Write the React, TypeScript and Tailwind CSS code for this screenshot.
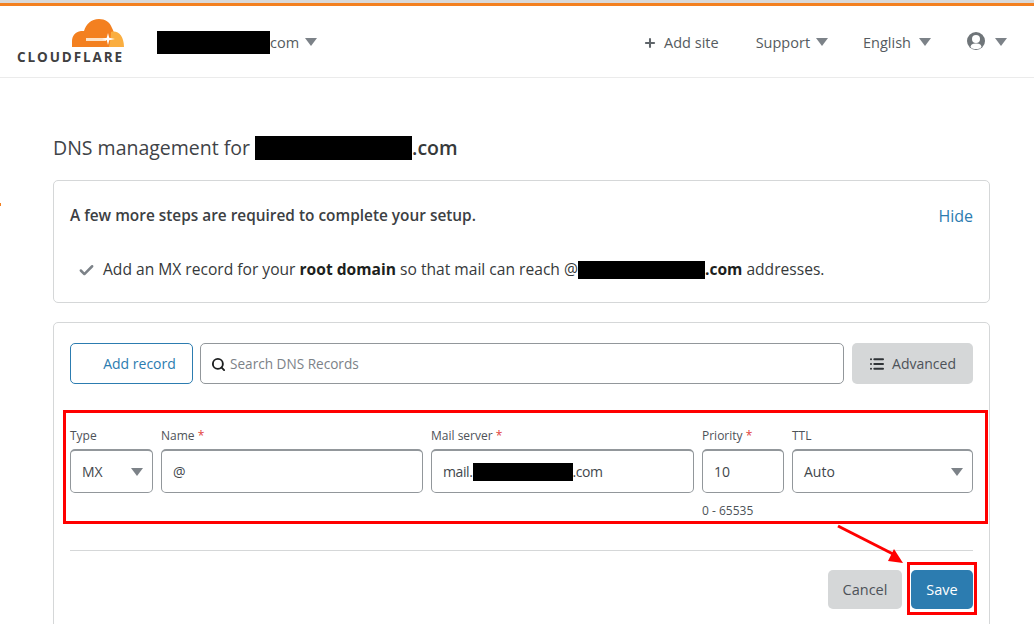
import { Check, List, Plus, Search } from "lucide-react"

function Caret({ className = "" }: { className?: string }) {
  return (
    <svg viewBox="0 0 12 8" className={`w-[12px] h-[8px] ${className}`}>
      <path d="M0 0H12L6 8Z" fill="#7c8288" />
    </svg>
  )
}

function Logo() {
  return (
    <div className="flex flex-col items-start w-[108px] ml-[17px] mt-[-1px]">
      <svg viewBox="0 0 52 28" className="w-[52px] h-[28px] ml-[55px]">
        <path
          d="M0 28V22C0 17 3 13 9 12C10 12 11 12 12 12C14 5 19 0 27 0C33 0 38 3 40 9C41 11 42 13 42 15L42 28Z"
          fill="#f38020"
        />
        <path d="M39 13C46 11 52 17 52 28H37C38 23 39 18 39 13Z" fill="#faae40" />
        <path d="M14 19H34V22H14Z" fill="#fde3c8" />
        <path d="M36 14L37.2 18.8L43 20L37.2 21.2L36 26L34.8 21.2L30 20L34.8 18.8Z" fill="#ffffff" />
      </svg>
      <span className="text-[13.5px] leading-[14px] font-bold tracking-[1.9px] text-[#404041] mt-[3px]">
        CLOUDFLARE
      </span>
    </div>
  )
}

function Field({
  label,
  required,
  width,
  children,
}: {
  label: string
  required?: boolean
  width: string
  children: React.ReactNode
}) {
  return (
    <div className={`flex flex-col ${width}`}>
      <label className="text-[12px] leading-[16px] text-[#4d5258] h-[21px] mt-[3px]">
        {label}
        {required && <span className="text-[#e2413c]"> *</span>}
      </label>
      <div className="h-[44px] border border-[#92979b] border-t-2 rounded-[5px] flex items-center justify-between px-[11px] text-[14px] text-[#42474c] bg-white">
        {children}
      </div>
    </div>
  )
}

export default function App() {
  return (
    <div className="relative h-[624px] w-[1034px] overflow-hidden bg-white font-['Open_Sans',sans-serif] text-[#36393a]">
      <div className="h-[3px] bg-[#d9d9d9]" />
      <div className="h-[3px] bg-[#f38020]" />

      <header className="h-[72px] border-b border-[#ebebeb] flex items-center">
        <Logo />
        <div className="ml-[32px] flex items-center text-[14.5px] text-[#555b60] mt-[2px]">
          <span className="w-[113px] h-[23px] bg-black" />
          <span>com</span>
          <Caret className="ml-[6px] mb-[1px]" />
        </div>
        <nav className="ml-auto mr-[27px] mt-[2px] flex items-center text-[14.5px] text-[#555b60]">
          <span className="flex items-center mr-[37px]">
            <Plus size={14} strokeWidth={3.5} className="text-[#5f656a] mr-[7px]" />
            Add site
          </span>
          <span className="flex items-center mr-[35px]">
            Support
            <Caret className="ml-[6px] mb-[1px]" />
          </span>
          <span className="flex items-center mr-[36px]">
            English
            <Caret className="ml-[8px] mb-[1px]" />
          </span>
          <svg viewBox="0 0 18 20" className="w-[18px] h-[20px] mr-[10px] mb-[3px]">
            <circle cx="9" cy="10" r="9" fill="#6f7579" />
            <circle cx="9" cy="8" r="4" fill="#ffffff" />
            <path d="M3.5 16C4 13 6 12.5 9 12.5S14 13 14.5 16C13 18 11 18 9 18S5 18 3.5 16Z" fill="#ffffff" />
          </svg>
          <Caret className="mb-[1px]" />
        </nav>
      </header>

      <main className="pl-[53px] pr-[44px]">
        <h1 className="mt-[55px] h-[30px] flex items-center text-[19.5px] leading-[30px] text-[#3f4347]">
          DNS management for
          <span className="ml-[5px] w-[157px] h-[24px] bg-black" />
          <span className="font-semibold text-[#36393a]">.com</span>
        </h1>

        <section className="mt-[17px] h-[123px] border border-[#d5d7d8] rounded-[5px] pl-[16px] pr-[16px] pt-[23px]">
          <div className="flex items-center justify-between h-[24px]">
            <p className="text-[15.4px] font-semibold text-[#3c4043]">
              A few more steps are required to complete your setup.
            </p>
            <a className="text-[16px] text-[#2c7cb0]">Hide</a>
          </div>
          <div className="mt-[30px] flex items-center text-[15.6px] h-[24px] text-[#36393a]">
            <Check size={17} strokeWidth={3.5} className="text-[#7c8288] ml-[8px] mr-[8px]" />
            <span>
              Add an MX record for your <b className="font-bold text-[#1d1f20]">root domain</b> so that mail can reach @
            </span>
            <span className="w-[127px] h-[18px] bg-black" />
            <b className="font-bold text-[#1d1f20]">.com</b>
            <span className="ml-[4px]">addresses.</span>
          </div>
        </section>

        <section className="mt-[19px] h-[400px] border border-[#d5d7d8] rounded-[5px] pl-[16px] pr-[16px] pt-[20px]">
          <div className="flex gap-[7px] h-[41px]">
            <button className="w-[123px] border border-[#2c7cb0] rounded-[5px] pl-[16px] text-[14px] text-[#2c7cb0]">
              Add record
            </button>
            <div className="flex-1 flex items-center border border-[#92979b] rounded-[5px] px-[10px] pt-[1px] text-[13.6px] text-[#7c8288]">
              <Search size={15} strokeWidth={3} className="text-[#1d1f20] mr-[4px]" />
              Search DNS Records
            </div>
            <button className="ml-[1px] w-[121px] flex items-center justify-center bg-[#d5d7d8] rounded-[5px] text-[14px] text-[#4d5258]">
              <List size={16} strokeWidth={3} className="text-[#2f3336] mr-[7px]" />
              Advanced
            </button>
          </div>

          <div className="relative mt-[41px]">
            <div className="flex gap-[8px]">
              <Field label="Type" width="w-[83px]">
                MX
                <Caret className="w-[10px] h-[7px] mr-[-2px]" />
              </Field>
              <Field label="Name" required width="w-[262px]">
                @
              </Field>
              <Field label="Mail server" required width="w-[263px]">
                <span className="flex items-center">
                  <span className="tracking-[-0.4px]">mail.</span>
                  <span className="w-[100px] h-[18px] bg-black" />
                  <span className="tracking-[-0.4px]">.com</span>
                </span>
              </Field>
              <div className="flex flex-col w-[82px]">
                <Field label="Priority" required width="w-[82px]">
                  10
                </Field>
                <span className="mt-[10px] text-[12px] leading-[16px] text-[#4d5258]">0 - 65535</span>
              </div>
              <Field label="TTL" width="w-[181px]">
                Auto
                <Caret className="w-[10px] h-[7px] mr-[-2px]" />
              </Field>
            </div>
            {/* red annotation round the record row */}
            <div className="absolute left-[-7px] top-[-15px] w-[925px] h-[114px] border-[3px] border-[#ff0000]" />
          </div>

          <div className="mt-[31px] border-t border-[#d5d7d8]" />

          <div className="relative mt-[19px] flex justify-end gap-[9px] h-[39px]">
            <button className="w-[74px] bg-[#d5d7d8] rounded-[5px] text-[14.5px] text-[#4d5258]">Cancel</button>
            <button className="w-[62px] bg-[#2c7cb0] rounded-[5px] text-[14.5px] text-white font-medium">Save</button>
            <div className="absolute right-[-4px] top-[-8px] w-[70px] h-[53px] border-[3px] border-[#ff0000]" />
          </div>
        </section>
      </main>

      {/* arrow between the two annotations */}
      <svg viewBox="0 0 1034 624" className="absolute inset-0 w-[1034px] h-[624px] pointer-events-none">
        <path d="M838 526L893 554" stroke="#ff0000" strokeWidth="3" fill="none" />
        <path d="M903 563L888 561L894 549Z" fill="#ff0000" />
      </svg>
      <div className="absolute left-0 top-[203px] w-[1px] h-[3px] bg-[#f38020]" />
    </div>
  )
}
